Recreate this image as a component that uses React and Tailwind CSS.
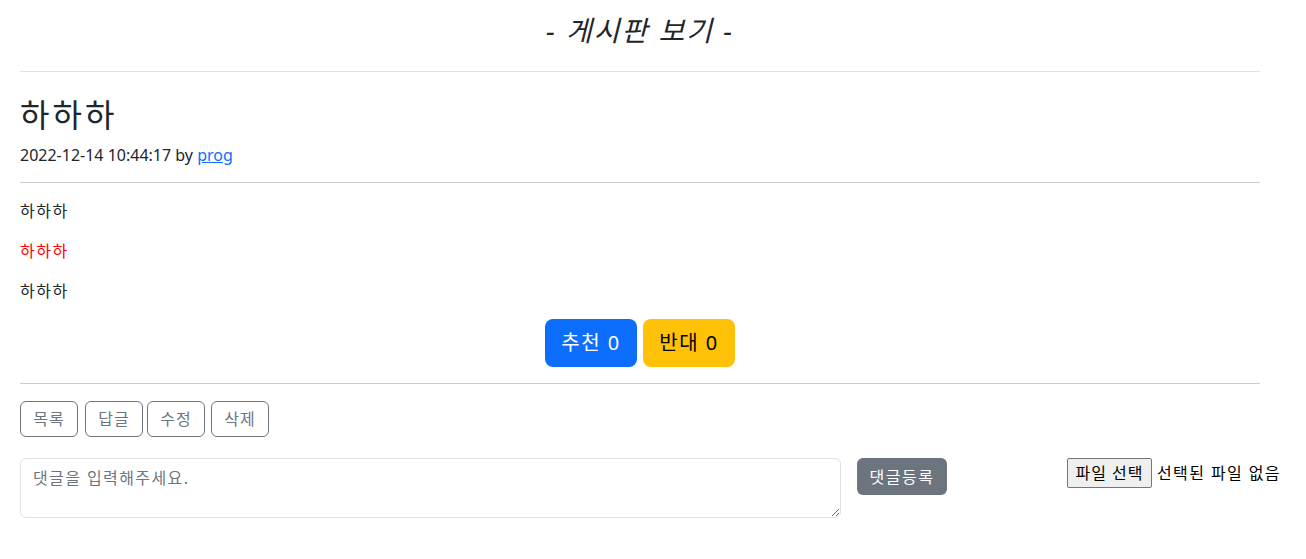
import React from 'react'

const font = { fontFamily: '"Noto Sans", "Noto Sans CJK KR", sans-serif' }

export default function App() {
  const paragraphs = [
    { text: '하하하', red: false },
    { text: '하하하', red: true },
    { text: '하하하', red: false }
  ]

  return (
    <div className="min-h-screen bg-white text-[#212529] font-['Noto_Sans','Noto_Sans_CJK_KR',sans-serif]">
      <div className="px-[20px] w-[1280px]">
        {/* page heading */}
        <h3 className="pt-[13px] h-[55px] text-center italic text-[28px] leading-[34px] font-normal tracking-[2px]">
          - 게시판 보기 -
        </h3>
        <div className="border-t border-[#e2e2e2] mt-[16px]" />

        {/* post title + meta */}
        <h2 className="mt-[24px] text-[32px] leading-[38px] font-normal tracking-[3px]">하하하</h2>
        <div className="mt-[9px] text-[16px] leading-[24px]">
          2022-12-14 10:44:17 by{' '}
          <a href="#" className="text-[#0d6efd] underline">prog</a>
        </div>
        <div className="border-t border-[#cccccc] mt-[15px]" />

        {/* body */}
        <div className="pt-[16px]">
          {paragraphs.map((p, i) => (
            <p key={i} className={`text-[16px] leading-[24px] mb-[16px] tracking-[1.5px] ${p.red ? 'text-[#ff0000]' : ''}`}>
              {p.text}
            </p>
          ))}
        </div>

        {/* vote buttons */}
        <div className="flex justify-center gap-[6px]">
          <button className="h-[48px] w-[92px] rounded-[8px] bg-[#0d6efd] text-white text-[20px] leading-[30px] tracking-[1.5px]">
            추천 0
          </button>
          <button className="h-[48px] w-[92px] rounded-[8px] bg-[#ffc107] text-black text-[20px] leading-[30px] tracking-[1.5px]">
            반대 0
          </button>
        </div>
        <div className="border-t border-[#cccccc] mt-[16px]" />

        {/* action buttons */}
        <div className="flex mt-[17px]">
          {['목록', '답글', '수정', '삭제'].map((label, i) => (
            <button
              key={label}
              className={`h-[36px] w-[58px] shrink-0 border border-[#6c757d] rounded-[6px] text-[#6c757d] text-[16px] tracking-[1px] ${i === 0 ? 'mr-[7px]' : i === 1 ? 'mr-[4px]' : 'mr-[6px]'}`}
            >
              {label}
            </button>
          ))}
        </div>

        {/* comment form */}
        <div className="flex items-start mt-[21px]">
          <textarea
            placeholder="댓글을 입력해주세요."
            className="w-[821px] shrink-0 h-[60px] border border-[#dee2e6] rounded-[6px] px-[12px] py-[7px] text-[16px] leading-[24px] tracking-[1.4px] placeholder:text-[#6c757d] outline-none"
            style={font}
          />
          <button className="ml-[16px] shrink-0 h-[37px] w-[90px] rounded-[6px] bg-[#6c757d] text-white text-[16px] tracking-[1.5px]">
            댓글등록
          </button>
          <div className="ml-[120px] shrink-0 flex items-center text-[16px] text-black">
            <span className="h-[30px] w-[85px] flex items-center justify-center border border-[#767676] rounded-[2px] bg-[#efefef] tracking-[1px]">
              파일 선택
            </span>
            <span className="ml-[5px] whitespace-nowrap tracking-[1.4px]">선택된 파일 없음</span>
          </div>
        </div>
      </div>
    </div>
  )
}
